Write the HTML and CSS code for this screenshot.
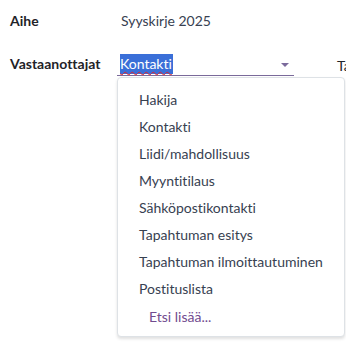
FILE: index.html
```html
<!DOCTYPE html>
<html>

<head>
  <title>Viesti</title>
  <link rel="stylesheet" href="styles.css">
</head>

<body>
  <div class="form">
    <div class="row row-subject">
      <label class="field-label">Aihe</label>
      <div class="field-value">Syyskirje 2025</div>
    </div>

    <div class="row row-recipients">
      <label class="field-label">Vastaanottajat</label>
      <div class="select-wrap">
        <div class="select-input">
          <span class="selected-text">Kontakti</span>
          <span class="caret"></span>
        </div>
        <!-- avoin valikko -->
        <ul class="dropdown">
          <li>Hakija</li>
          <li>Kontakti</li>
          <li>Liidi/mahdollisuus</li>
          <li>Myyntitilaus</li>
          <li>Sähköpostikontakti</li>
          <li>Tapahtuman esitys</li>
          <li>Tapahtuman ilmoittautuminen</li>
          <li>Postituslista</li>
          <li class="search-more">Etsi lisää...</li>
        </ul>
      </div>
      <label class="field-label side-label">Ta</label>
    </div>
  </div>
</body>

</html>
```

FILE: styles.css
```css
body,
html {
  margin: 0;
  height: 100%;
  background-color: #fff;
  overflow: hidden;
}

body {
  font-family: Lato, "Noto Sans", sans-serif;
  font-size: 14px;
  font-variant-ligatures: none;
  color: #212529;
}

/* lomake */
.form {
  padding: 11px 0 0 10px;
}

.row {
  display: flex;
  align-items: flex-start;
}

.row-recipients {
  margin-top: 22px;
}

.field-label {
  width: 107px;
  flex-shrink: 0;
  font-weight: bold;
  line-height: 20px;
  color: #1f2328;
}

.row-recipients .field-label {
  padding-top: 1px;
}

.field-value {
  padding-left: 4px;
  line-height: 20px;
  color: #374151;
}

/* valintakenttä */
.select-wrap {
  position: relative;
  width: 177px;
  flex-shrink: 0;
}

.select-input {
  display: flex;
  align-items: center;
  height: 22px;
  padding-left: 3px;
  border-bottom: 1px solid #7a6a9a;
}

.selected-text {
  background-color: #3a6fd8;
  color: #fff;
  line-height: 20px;
  padding-right: 1px;
  text-decoration: underline wavy #e0242b;
  text-decoration-thickness: 1px;
  text-underline-offset: 2px;
}

.caret {
  margin-left: auto;
  margin-right: 5px;
  margin-top: 1px;
  border-left: 4px solid transparent;
  border-right: 4px solid transparent;
  border-top: 4px solid #7b6a9c;
}

.side-label {
  margin-left: 43px;
  font-weight: normal;
  color: #212529;
  padding-top: 3px !important;
}

/* avattu valikko */
.dropdown {
  position: absolute;
  top: 24px;
  left: 0;
  width: 226px;
  margin: 0;
  padding: 8px 0 4px 0;
  list-style-type: none;
  background-color: #fff;
  border: 1px solid #dee2e6;
  border-radius: 4px;
  box-shadow: 0 2px 3px rgba(0, 0, 0, 0.12);
}

.dropdown li {
  height: 27px;
  line-height: 27px;
  padding-left: 21px;
  color: #374151;
  white-space: nowrap;
}

.dropdown .search-more {
  height: 30px;
  line-height: 30px;
  padding-left: 31px;
  color: #714b8f;
}
```
